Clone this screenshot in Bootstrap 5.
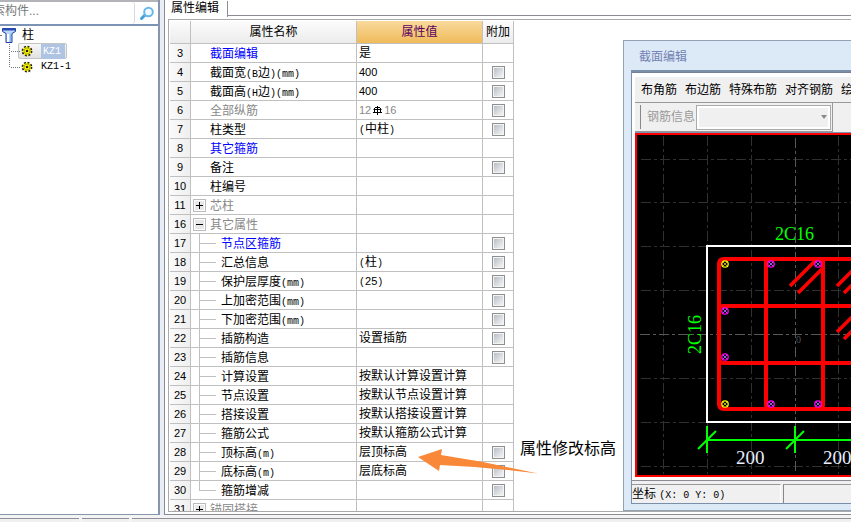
<!DOCTYPE html>
<html lang="zh-CN">
<head>
<meta charset="utf-8">
<meta name="viewport" content="width=device-width, initial-scale=1">
<title>属性编辑</title>
<link href="https://cdn.jsdelivr.net/npm/bootstrap@5.3.0/dist/css/bootstrap.min.css" rel="stylesheet">
<style>
:root{--line:#c0c0c0;--edge:#8b8b94;--face:#f0f0f0}
body{font:12px/16px "Liberation Sans","Noto Sans CJK SC",sans-serif;color:#000;background:#e9eef6}
.lat{font-family:"Liberation Mono",monospace;font-size:10px;line-height:1}
.side{width:160px;border-right:2px solid #8796ae;border-bottom:1px solid #8796ae}
.search{height:26px;border-top:2px solid #b3b4ba;border-bottom:2px solid #7b93b5}
.search input{width:142px;border:0;border-right:1px solid #d5d8e4;padding:0 0 4px;margin-left:-7px;font-size:12px;background:#fff;outline:0;border-radius:0 3px 3px 0}
.search input::placeholder{color:#777;opacity:1}
.search button{border:0;background:none}
.tree{padding-top:1px}
.tree-row{height:16px}
.tree-row a{color:#000}
.root{padding-left:22px}
.picked{border:1px solid #c4c4c4;border-radius:2px;background:linear-gradient(#f8f8f8,#e2e2e2);margin-left:18px;padding:0 1px 0 2px}
.picked a{background:#afc3e3;color:#fff;padding:3px 4px 2px 2px}
.child{margin-left:21px}
.guide{left:0;top:26px}
.editor{margin-left:4px;border-left:1px solid var(--edge);border-bottom:1px solid var(--edge)}
.tabs{height:16px;border-bottom:1px solid var(--edge)}
.tab-now{width:63px;height:16px;border:0;border-right:1px solid var(--edge);background:#fff;padding:0 0 0 6px;line-height:11px;text-align:left}
.frame{margin:3px 0 2px 3px;border:1px solid #aaa;border-right:0;padding:1px 0 0 1px}
.props{width:344px;table-layout:fixed;border-collapse:separate;border-spacing:0}
.props th,.props td{border-right:1px solid var(--line);border-bottom:1px solid var(--line);padding:0;height:19px;white-space:nowrap;overflow:hidden}
.props thead th{height:23px;text-align:center;font-weight:400;background:linear-gradient(#fcfcfc,#ececec)}
.props thead .value-head{background:linear-gradient(#f9d99c,#efbb5a);color:#5c0060}
.props tbody th{font-weight:400;text-align:center;font-size:11px;line-height:18px;background:linear-gradient(90deg,#fafafa,#efefef)}
.w-no{width:21px}.w-name{width:166px}.w-value{width:126px}.w-add{width:31px}
.name,.val{height:18px;line-height:18px}
.name span:last-child{padding-top:1px}
.val{padding-left:2px}
.indent{width:19px}
.branch{width:17px;height:19px;margin:0 5px 0 8px;background:linear-gradient(var(--line),var(--line)) 0 0/1px 100% no-repeat,linear-gradient(var(--line),var(--line)) 0 9px/17px 1px no-repeat}
.branch.last{background-size:1px 10px,17px 1px}
.fold{width:13px;height:13px;margin:0 4px 0 2px;padding:0;border:1px solid #bbb;background:#e8e8e8;box-shadow:inset 0 0 0 1px #fff}
.blue{color:#00f}.dim{color:#888}
.num{font-size:11px}
.steel{margin:0 2px}
.props input{appearance:none;width:13px;height:13px;margin:0;border:1px solid #8e8f8f;background:linear-gradient(135deg,#b9bfc8,#f4f4f4) content-box;padding:1px;box-shadow:inset 0 0 0 1px #f4f4f4}
.note{left:520px;top:439px;font-size:16px;line-height:20px}
.arrow{left:418px;top:448px}
.dialog-box{left:623px;right:0;top:40px;height:471px;border:1px solid #93a1b5;border-right:0;background:#dce9f6;padding-left:7px}
.dialog-title{height:29px;padding:0 0 0 8px;line-height:33px;color:#7482b4}
.dialog-body{border:1px solid #7b8fa9;border-width:2px 0 1px 1px;margin-bottom:6px}
.pad{border-top:1px solid #77809a;padding:4px 0 3px 3px;background:#fff}
.tools{height:26px;gap:8px;background:var(--face);border-bottom:1px solid #999;padding-left:6px}
.tools button{border:0;background:none;padding:0;white-space:nowrap;color:#000}
.info{background:var(--face);height:29px}
.info-group{width:198px;border-right:1px solid #999;border-bottom:1px solid #999;padding-right:1px}
.grip{width:6px;height:24px;border-right:1px solid #888}
.info label{color:#999;margin:0 1px 0 6px}
.info select{height:25px;border:1px solid #aaa;box-shadow:inset 0 0 0 2px #fff;background:var(--face);appearance:none;min-width:0}
.chev{right:5px;top:12px;border:3px solid transparent;border-top:4px solid #888}
.board{height:345px;border-top:1px solid #7b93b5;background:#000}
.board svg{display:block;width:100%;height:344px}
.state{border-top:1px solid #8b8b94;background:var(--face);padding-top:3px;gap:2px}
.state div{border-top:1px solid #999;line-height:18px}
.state-a{width:149px;border-right:1px solid #fff}
.state-b{border-left:1px solid #888}
.foot{height:7px;background:#f4f4f4;padding-top:3px;gap:3px}
.foot div{border-top:1px solid #8f8f95;background:var(--face)}
.foot .f1{width:79px}.foot .f2{width:47px}
</style>
<script src="https://cdn.jsdelivr.net/npm/bootstrap@5.3.0/dist/js/bootstrap.bundle.min.js"></script>
</head>
<body class="d-flex flex-column vh-100 overflow-hidden">
<main class="d-flex flex-grow-1 overflow-hidden position-relative">
  <aside class="side bg-white flex-shrink-0 overflow-hidden position-relative">
    <form class="search d-flex overflow-hidden">
      <input type="text" class="flex-shrink-0" placeholder="索构件..." aria-label="搜索构件">
      <button type="button" class="p-0 ps-1" aria-label="搜索"><svg width="18" height="18" viewBox="0 0 18 18"><path d="M6 11 2.500 14.500" stroke="#3fa2df" stroke-width="3" stroke-linecap="round"/><circle cx="9.500" cy="8" r="4.300" fill="#f2faff" stroke="#68b9ea" stroke-width="2"/></svg></button>
    </form>
    <svg class="guide position-absolute" width="36" height="48" viewBox="0 0 36 48"><path d="M9.500 18V41M11 25.500H21M11 41.500H21" fill="none" stroke="#777" stroke-dasharray="1 1"/><path d="M0 9.500H2" stroke="#777"/><path d="M2.500 2.500H15.500V5.500L12 7.500V16.500H6V7.500L2.500 5.500Z" fill="#b9d5f8" stroke="#1c3f9f"/><path d="M3 3.500H15" stroke="#294fb5" stroke-width="2"/><path d="M8 8V16" stroke="#fff" stroke-width="2"/><path d="M11 8V16" stroke="#5c90e0"/></svg>
    <div class="tree">
    <div class="tree-row root d-flex align-items-center"><a href="#" class="text-decoration-none">柱</a></div>
    <div class="tree-row d-flex"><div class="picked d-flex align-items-center"><svg class="me-1" width="12" height="12" viewBox="0 0 12 12"><use href="#gear"/></svg><a href="#" class="lat text-decoration-none ms-1">KZ1</a></div></div>
    <div class="tree-row d-flex align-items-center"><div class="child d-flex align-items-center"><svg class="me-2" width="12" height="12" viewBox="0 0 12 12"><g id="gear"><circle cx="6" cy="6" r="4.600" fill="#ff0" stroke="#222" stroke-width="1.600" stroke-dasharray="2 1.600"/><circle cx="6" cy="6" r="3" fill="#ff0" stroke="#886f00" stroke-width=".6"/><circle cx="6" cy="6" r="1.300" fill="#222"/></g></svg><a href="#" class="lat text-decoration-none">KZ1-1</a></div></div>
    </div>
  </aside>

  <section class="editor bg-white flex-grow-1 d-flex flex-column overflow-hidden">
    <div class="tabs flex-shrink-0"><button type="button" class="tab-now">属性编辑</button></div>
    <div class="frame flex-grow-1 overflow-hidden">
      <table class="props">
        <thead><tr><th class="w-no"></th><th class="w-name">属性名称</th><th class="w-value value-head">属性值</th><th class="w-add">附加</th></tr></thead>
        <tbody id="rows"></tbody>
      </table>
    </div>
  </section>

  <div class="note position-absolute">属性修改标高</div>
  <svg class="arrow position-absolute" width="121" height="27" viewBox="0 0 121 27"><path d="M0 9 24 1 23 7 65 14 120 25.500Q70 19 22 17L21 23Z" fill="#f98839"/></svg>

  <section class="dialog-box position-absolute overflow-hidden d-flex flex-column">
    <div class="dialog-title">截面编辑</div>
    <div class="dialog-body flex-grow-1 d-flex flex-column">
      <div class="pad">
        <div class="tools d-flex align-items-center"><button type="button">布角筋</button><button type="button">布边筋</button><button type="button">特殊布筋</button><button type="button">对齐钢筋</button><button type="button">绘图</button></div>
        <div class="info d-flex">
          <div class="info-group d-flex align-items-center position-relative"><span class="grip"></span><label for="bar" class="text-nowrap">钢筋信息</label><select id="bar" class="flex-grow-1" disabled><option></option></select><span class="chev position-absolute"></span></div>
        </div>
        <div class="board">
          <svg viewBox="635 133 216 344" preserveAspectRatio="xMinYMin slice">
            <g fill="none" stroke="#303030" stroke-dasharray="10 3 3 3"><path d="M663.500 136V474M707.500 136V474M751.500 136V474M838.500 136V474M641 159.500H900M641 202.500H900M641 246.500H900M641 290.500H900M641 378.500H900M641 422.500H900M641 466.500H900"/><path d="M795.500 138V474M640 334.500H900" stroke="#585858"/></g>
            <path d="M900 134H636V476H900" fill="none" stroke="#f00" stroke-width="2"/>
            <path d="M900 246H707V422H900" fill="none" stroke="#fff" stroke-width="2"/>
            <g fill="none" stroke="#f00" stroke-width="4"><path d="M900 259H724Q719 259 719 264V404Q719 409 724 409H900M900 306H723Q719 306 719 310V358Q719 363 724 363H900M766 259V405Q766 409 770 409M823 259V405Q823 409 819 409"/><path d="M790 286 815 261M798 293 824 267M837 286 862 261M844 293 869 268M837 332 862 307M844 339 869 314" stroke-width="3.600"/></g>
            <g fill="none" stroke-width="1.300"><g stroke="#ff0"><circle cx="725" cy="264" r="3.200"/><circle cx="725" cy="404" r="3.200"/></g><g stroke="#f0f"><circle cx="771" cy="264" r="3.200"/><circle cx="818" cy="264" r="3.200"/><circle cx="725" cy="311" r="3.200"/><circle cx="725" cy="357" r="3.200"/><circle cx="771" cy="404" r="3.200"/><circle cx="818" cy="404" r="3.200"/></g></g>
            <g stroke-width="1"><path d="M723 262l4 4m0-4l-4 4M723 402l4 4m0-4l-4 4" stroke="#aa2"/><path d="M769 262l4 4m0-4l-4 4M816 262l4 4m0-4l-4 4M723 309l4 4m0-4l-4 4M723 355l4 4m0-4l-4 4M769 402l4 4m0-4l-4 4M816 402l4 4m0-4l-4 4" stroke="#86c"/></g>
            <g fill="none" stroke="#0f0" stroke-width="2"><path d="M707 440H900M707 426V453M795 426V453M698 449 716 431M786 449 804 431"/></g>
            <g font-family="Liberation Serif, serif" font-size="19"><g fill="#e8eeff"><text x="736" y="464">200</text><text x="823" y="464">200</text></g><g fill="#0f0" font-size="18"><text x="775" y="240">2C16</text><text transform="translate(701 354) rotate(-90)">2C16</text></g><text x="796" y="343" fill="#555" font-size="10">0</text></g>
          </svg>
        </div>
      </div>
      <div class="state d-flex flex-grow-1"><div class="state-a">坐标 <span class="lat"> (X: 0 Y: 0)</span></div><div class="state-b flex-grow-1"></div></div>
    </div>
  </section>
</main>
<footer class="foot d-flex flex-shrink-0"><div class="f1"></div><div class="f2"></div><div class="flex-grow-1"></div></footer>
<script>
// number, name, value, has checkbox, kind (g: top level, c: child, l: last child, +/-: group), colour class
const data = [
 [3,'截面编辑','是',0,'g','blue'],[4,'截面宽(B边)(mm)','400',1,'g',''],[5,'截面高(H边)(mm)','400',1,'g',''],
 [6,'全部纵筋','rebar',1,'g','dim'],[7,'柱类型','(中柱)',1,'g',''],[8,'其它箍筋','',0,'g','blue'],
 [9,'备注','',1,'g',''],[10,'柱编号','',0,'g',''],[11,'芯柱','',0,'+','dim'],[16,'其它属性','',0,'-','dim'],
 [17,'节点区箍筋','',1,'c','blue'],[18,'汇总信息','(柱)',1,'c',''],[19,'保护层厚度(mm)','(25)',1,'c',''],
 [20,'上加密范围(mm)','',1,'c',''],[21,'下加密范围(mm)','',1,'c',''],[22,'插筋构造','设置插筋',1,'c',''],
 [23,'插筋信息','',1,'c',''],[24,'计算设置','按默认计算设置计算',0,'c',''],[25,'节点设置','按默认节点设置计算',0,'c',''],
 [26,'搭接设置','按默认搭接设置计算',0,'c',''],[27,'箍筋公式','按默认箍筋公式计算',0,'c',''],
 [28,'顶标高(m)','层顶标高',1,'c',''],[29,'底标高(m)','层底标高',1,'c',''],[30,'箍筋增减','',1,'l',''],[31,'锚固搭接','',0,'+','dim']];
const latin = s => s.replace(/[()A-Za-z]+|\d+/g, m => `<span class="${/\d/.test(m) ? 'num' : 'lat'}">${m}</span>`);
const rebar = '<span class="dim num">12</span><svg class="steel" width="9" height="9" viewBox="0 0 9 9"><path d="M4.500 0V9M0 6.500H9M2 1.500H7M.5 3.500H8.500M1.500 2V6M7.500 2V6" fill="none" stroke="#000"/></svg><span class="dim num">16</span>';
const lead = k => k === 'g' ? '<span class="indent"></span>'
  : k === 'c' ? '<span class="branch"></span>' : k === 'l' ? '<span class="branch last"></span>'
  : `<button type="button" class="fold d-flex" aria-label="展开或收起"><svg width="11" height="11" viewBox="0 0 11 11"><path d="M2 5.500H9${k === '+' ? 'M5.500 2V9' : ''}" stroke="#000"/></svg></button>`;
document.getElementById('rows').innerHTML = data.map(([n, name, v, box, k, c]) =>
 `<tr><th scope="row">${n}</th><td><div class="name d-flex align-items-center">${lead(k)}<span class="${c}">${latin(name)}</span></div></td><td><div class="val">${v === 'rebar' ? rebar : latin(v)}</div></td><td>${box ? `<input type="checkbox" class="d-block mx-auto" aria-label="附加 ${name}">` : ''}</td></tr>`).join('');
</script>
</body>
</html>
